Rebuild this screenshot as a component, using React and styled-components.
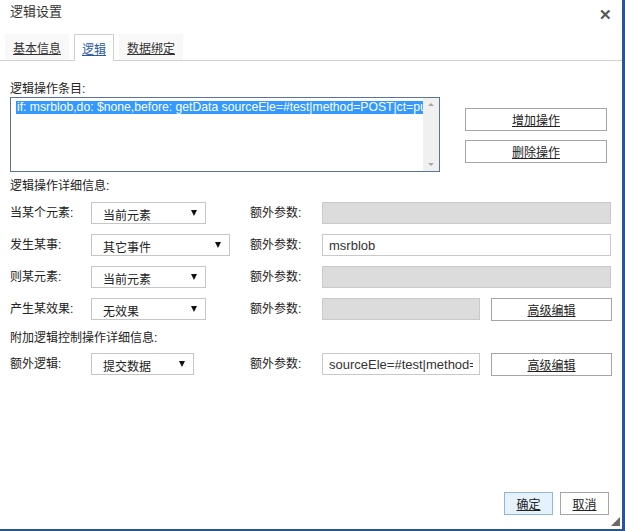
import React from "react";
import styled, { createGlobalStyle } from "styled-components";

const GlobalStyle = createGlobalStyle`
  html, body {
    margin: 0;
    padding: 0;
    background: #fff;
  }
  body {
    font-family: "Liberation Sans", "Noto Sans CJK SC", sans-serif;
    font-size: 12px;
    color: #222;
  }
`;

const Dialog = styled.div`
  position: relative;
  width: 625px;
  height: 531px;
  box-sizing: border-box;
  border-right: 3px solid #2b5590;
  border-bottom: 2px solid #2b5590;
  background: #fff;
  display: flex;
  flex-direction: column;
`;

const TitleBar = styled.div`
  height: 34px;
  display: flex;
  align-items: flex-start;
  justify-content: space-between;
  padding: 3px 10px 0 10px;
  box-sizing: border-box;
`;

const Title = styled.span`
  font-size: 13px;
  line-height: 18px;
  color: #333;
`;

const Close = styled.span`
  font-size: 15px;
  font-weight: bold;
  line-height: 18px;
  color: #555;
  margin-top: 3px;
  cursor: pointer;
`;

const TabBar = styled.div`
  display: flex;
  gap: 5px;
  padding-left: 5px;
  height: 26px;
  border-bottom: 1px solid #cfcfcf;
`;

const Tab = styled.div`
  padding: 0 7px;
  height: ${(p) => (p.active ? "27px" : "26px")};
  box-sizing: border-box;
  display: flex;
  align-items: center;
  font-size: 12px;
  text-decoration: underline;
  color: ${(p) => (p.active ? "#2c5aa8" : "#333")};
  background: ${(p) => (p.active ? "#fff" : "#f8f8f8")};
  border: 1px solid ${(p) => (p.active ? "#cfcfcf" : "transparent")};
  border-bottom: none;
  cursor: pointer;
`;

const Body = styled.div`
  padding: 0 10px;
  flex: 1;
  display: flex;
  flex-direction: column;
`;

const SectionLabel = styled.div`
  line-height: 16px;
  margin-top: ${(p) => p.top || 0}px;
`;

const EntriesRow = styled.div`
  display: flex;
  align-items: flex-start;
`;

const ListBox = styled.div`
  width: 430px;
  height: 75px;
  box-sizing: border-box;
  border: 1px solid #5b7397;
  display: flex;
  overflow: hidden;
`;

const ListContent = styled.div`
  flex: 1;
  padding: 3px 0 0 5px;
  overflow: hidden;
  white-space: nowrap;
`;

const SelectedLine = styled.div`
  background: #3399ff;
  color: #fff;
  line-height: 13px;
  padding-left: 1px;
  font-size: 12.2px;
  overflow: hidden;
`;

const ScrollTrack = styled.div`
  width: 16px;
  background: #f0f0f0;
  display: flex;
  flex-direction: column;
  justify-content: space-between;
  align-items: center;
  padding: 5px 0;
  box-sizing: border-box;
`;

const ScrollArrow = styled.span`
  width: 0;
  height: 0;
  border-left: 3px solid transparent;
  border-right: 3px solid transparent;
  ${(p) =>
    p.dir === "up"
      ? "border-bottom: 3px solid #a6a6a6;"
      : "border-top: 3px solid #a6a6a6;"}
`;

const SideButtons = styled.div`
  display: flex;
  flex-direction: column;
  gap: 9px;
  margin: 11px 0 0 25px;
`;

const Button = styled.button`
  width: ${(p) => p.w || 142}px;
  height: 23px;
  box-sizing: border-box;
  border: 1px solid ${(p) => (p.primary ? "#8fb6e0" : "#a5a5a5")};
  background: ${(p) => (p.primary ? "#e5f1fb" : "#fff")};
  font-family: inherit;
  font-size: 12px;
  color: #222;
  text-decoration: underline;
  padding: 0;
  cursor: pointer;
`;

const FieldRow = styled.div`
  display: flex;
  align-items: center;
  height: 22px;
  margin-top: ${(p) => p.top || 10}px;
`;

const FieldLabel = styled.span`
  width: ${(p) => p.w}px;
  flex-shrink: 0;
  margin-top: -3px;
`;

const SelectCell = styled.div`
  width: 159px;
  flex-shrink: 0;
`;

const Select = styled.div`
  width: ${(p) => p.w}px;
  height: 22px;
  box-sizing: border-box;
  border: 1px solid #c6c6c6;
  display: flex;
  align-items: center;
  justify-content: space-between;
  padding: 2px 8px 0 11px;
  font-size: 12px;
  &::after {
    content: "";
    border-left: 3px solid transparent;
    border-right: 3px solid transparent;
    border-top: 6px solid #111;
    margin-top: -2px;
  }
`;

const Input = styled.input`
  width: ${(p) => (p.$short ? 158 : 289)}px;
  height: 22px;
  box-sizing: border-box;
  border: 1px solid #c9c9c9;
  background: ${(p) => (p.disabled ? "#dcdcdc" : "#fff")};
  padding: 0 6px;
  margin: 0;
  font-family: "Liberation Sans", "Noto Sans CJK SC", sans-serif;
  font-size: 13px;
  color: #333;
  outline: none;
`;

const EditButton = styled(Button)`
  margin-left: 11px;
`;

const Footer = styled.div`
  display: flex;
  justify-content: flex-end;
  gap: 7px;
  padding: 0 13px 14px 0;
  margin-top: auto;
`;

const Grip = styled.span`
  position: absolute;
  right: 2px;
  bottom: 3px;
  width: 0;
  height: 0;
  border-left: 9px solid transparent;
  border-bottom: 9px solid #6a6a6a;
`;

const rows = [
  { label: "当某个元素:", value: "当前元素", sw: 115, disabled: true },
  { label: "发生某事:", value: "其它事件", sw: 139, text: "msrblob" },
  { label: "则某元素:", value: "当前元素", sw: 115, disabled: true },
  { label: "产生某效果:", value: "无效果", sw: 115, disabled: true, short: true, edit: true },
];

const Field = ({ row, top }) => (
  <FieldRow top={top}>
    <FieldLabel w={81}>{row.label}</FieldLabel>
    <SelectCell>
      <Select w={row.sw}>{row.value}</Select>
    </SelectCell>
    <FieldLabel w={72}>额外参数:</FieldLabel>
    <Input
      disabled={row.disabled}
      $short={row.short}
      readOnly
      value={row.text || ""}
    />
    {row.edit && <EditButton w={121}>高级编辑</EditButton>}
  </FieldRow>
);

export default function App() {
  return (
    <>
      <GlobalStyle />
      <Dialog>
        <TitleBar>
          <Title>逻辑设置</Title>
          <Close>✕</Close>
        </TitleBar>
        <TabBar>
          <Tab>基本信息</Tab>
          <Tab active>逻辑</Tab>
          <Tab>数据绑定</Tab>
        </TabBar>
        <Body>
          <SectionLabel top={20}>逻辑操作条目:</SectionLabel>
          <EntriesRow>
            <ListBox>
              <ListContent>
                <SelectedLine>
                  if: msrblob,do: $none,before: getData sourceEle=#test|method=POST|ct=put
                </SelectedLine>
              </ListContent>
              <ScrollTrack>
                <ScrollArrow dir="up" />
                <ScrollArrow dir="down" />
              </ScrollTrack>
            </ListBox>
            <SideButtons>
              <Button>增加操作</Button>
              <Button>删除操作</Button>
            </SideButtons>
          </EntriesRow>
          <SectionLabel top={6}>逻辑操作详细信息:</SectionLabel>
          {rows.map((row, i) => (
            <Field key={i} row={row} top={i === 0 ? 8 : 10} />
          ))}
          <SectionLabel top={10}>附加逻辑控制操作详细信息:</SectionLabel>
          <FieldRow top={7}>
            <FieldLabel w={81}>额外逻辑:</FieldLabel>
            <SelectCell>
              <Select w={103}>提交数据</Select>
            </SelectCell>
            <FieldLabel w={72}>额外参数:</FieldLabel>
            <Input $short readOnly value="sourceEle=#test|method=POST|ct=put" />
            <EditButton w={121}>高级编辑</EditButton>
          </FieldRow>
        </Body>
        <Footer>
          <Button primary w={49}>确定</Button>
          <Button w={49}>取消</Button>
        </Footer>
        <Grip />
      </Dialog>
    </>
  );
}
